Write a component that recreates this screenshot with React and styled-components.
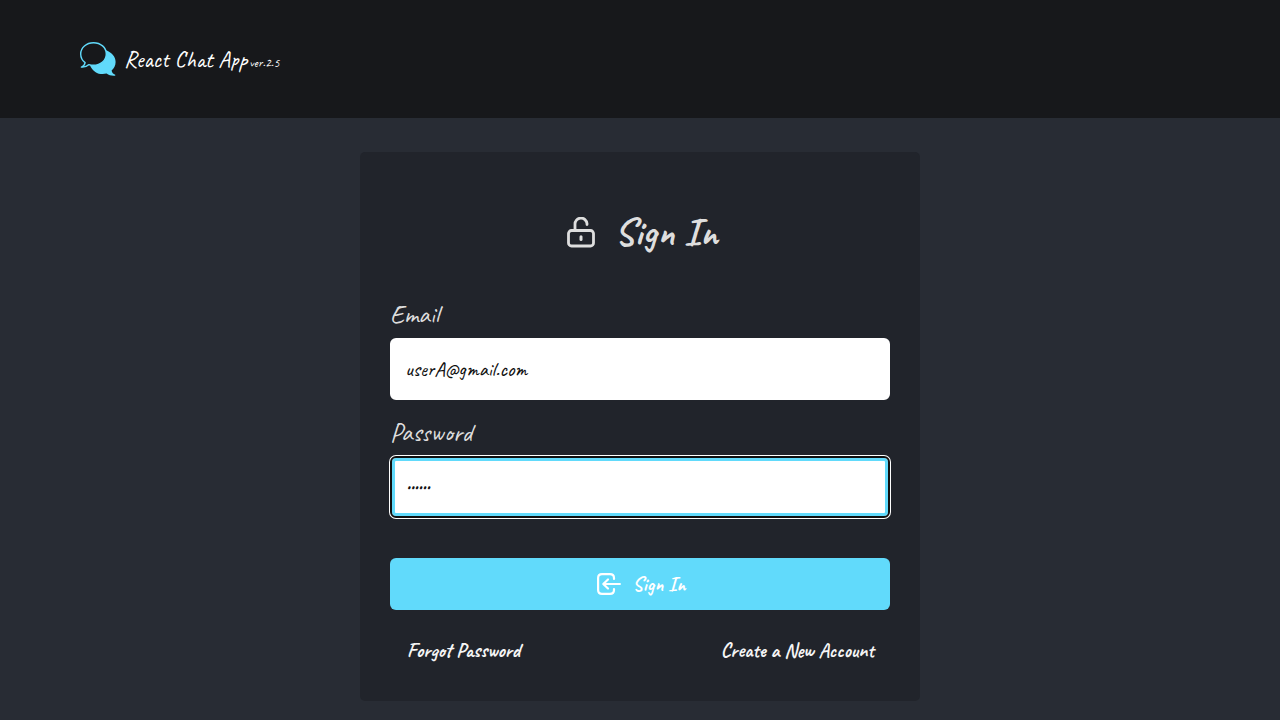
import React, { useState } from "react";
import styled, { createGlobalStyle } from "styled-components";

const cyan = "#61dafb";
const headerColor = "#17181b";

const GlobalStyle = createGlobalStyle`
  *, *::before, *::after { box-sizing: border-box; }
  body {
    margin: 0;
    background: #282c34;
    color: #fff;
    font-family: Caveat, Lato, cursive;
  }
  input, button { font: inherit; }
`;

const Header = styled.header`
  display: flex;
  align-items: center;
  min-height: 118px;
  padding: 0 80px;
  background: ${headerColor};
`;

const Brand = styled.div`
  display: flex;
  align-items: center;
  gap: 8px;
`;

const BrandName = styled.h1`
  display: flex;
  align-items: baseline;
  gap: 2px;
  margin: 0;
  padding-top: 4px;
  font-size: 23px;
  line-height: 24px;
  font-weight: 400;
`;

const Version = styled.small`
  font-size: 13px;
`;

const Main = styled.main`
  display: flex;
  justify-content: center;
  padding: 34px 16px 19px;
`;

const Card = styled.form`
  display: flex;
  flex-direction: column;
  width: 100%;
  max-width: 560px;
  padding: 60px 30px 40px;
  border-radius: 5px;
  background: #21242b;
`;

const Title = styled.h2`
  display: flex;
  align-items: center;
  justify-content: center;
  gap: 19px;
  margin: 0 0 46px;
  padding-left: 5px;
  color: #dedede;
  font-size: 39px;
  line-height: 42px;
  font-weight: 700;
`;

const Field = styled.div`
  display: flex;
  flex-direction: column;
  margin-bottom: 18px;
`;

const Label = styled.label`
  margin-bottom: 8px;
  color: #dedede;
  font-size: 26px;
  line-height: 30px;
`;

const Input = styled.input`
  width: 100%;
  height: 62px;
  padding: 0 13px;
  border: 2px solid #fff;
  border-radius: 6px;
  background: #fff;
  color: #101010;
  font-size: 21px;
  outline: none;
  caret-color: transparent;

  &:focus {
    border-color: #101010;
    box-shadow: 0 0 0 1px #fff, inset 0 0 0 3px ${cyan};
  }
`;

const Submit = styled.button`
  display: flex;
  align-items: center;
  justify-content: center;
  gap: 12px;
  height: 52px;
  margin-top: 22px;
  padding: 0 6px 0 8px;
  border: 0;
  border-radius: 6px;
  background: ${cyan};
  color: #fff;
  font-size: 20px;
  font-weight: 700;
  cursor: pointer;
`;

const Links = styled.nav`
  display: flex;
  justify-content: space-between;
  padding: 31px 16px 0 17px;
`;

const TextLink = styled.a`
  color: #f5f5f5;
  font-size: 20px;
  line-height: 20px;
  font-weight: 700;
  text-decoration: none;
`;

function ChatLogo() {
  return (
    <svg width="36" height="35" viewBox="0 0 36 35" aria-hidden="true">
      <path
        d="M25.500 8C32 10.500 35.600 14.800 35.600 20c0 3.500-1.500 6.500-4 8.500.4 2.200 1.600 3.500 3.600 4.300.4.300.2.900-.3 1-3.200.3-6-.5-8.300-2.200-6.900 1.600-13.300-.8-16.600-8.200Z"
        fill={cyan}
      />
      <path
        d="M13.500.7C6.400.7.7 5.600.7 11.900c0 3.700 1.700 6.600 4.400 8.700-.3 2-1.400 3.500-3.700 4.500 3 .3 5.600-.6 7.600-2.500 1.400.4 2.900.6 4.500.6 7.100 0 12.800-4.900 12.800-11.300S20.600.7 13.500.7Z"
        fill={headerColor}
        stroke={cyan}
        strokeWidth="1.400"
        strokeLinejoin="round"
      />
    </svg>
  );
}

function UnlockIcon() {
  return (
    <svg width="28" height="32" viewBox="0 0 28 32" fill="none" stroke="currentColor" strokeWidth="2.800" strokeLinecap="round" aria-hidden="true">
      <rect x="1.500" y="13.500" width="25" height="15.500" rx="3" />
      <path d="M8 13V7.500a6 6 0 0 1 12-.8V7.500" />
      <path d="M14 19.800v2.800" strokeWidth="3" />
    </svg>
  );
}

function EnterIcon() {
  return (
    <svg width="24" height="22" viewBox="0 0 24 22" fill="none" stroke="currentColor" strokeWidth="2.200" strokeLinecap="round" strokeLinejoin="round" aria-hidden="true">
      <path d="M17 6V5c0-2.500-1.500-3.900-4-3.900H5C2.500 1.100 1.100 2.500 1.100 5v12c0 2.500 1.400 3.900 3.900 3.900h8c2.500 0 4-1.400 4-3.900v-1" />
      <path d="M22.900 11H6.500M11 6.500 6.300 11 11 15.500" />
    </svg>
  );
}

export default function App() {
  const [email, setEmail] = useState("userA@gmail.com");
  const [password, setPassword] = useState("123456");

  return (
    <>
      <GlobalStyle />
      <Header>
        <Brand>
          <ChatLogo />
          <BrandName>
            React Chat App <Version>ver.2.5</Version>
          </BrandName>
        </Brand>
      </Header>
      <Main>
        <Card onSubmit={(event) => event.preventDefault()}>
          <Title>
            <UnlockIcon />
            Sign In
          </Title>
          <Field>
            <Label htmlFor="email">Email</Label>
            <Input id="email" type="email" value={email} onChange={(event) => setEmail(event.target.value)} />
          </Field>
          <Field>
            <Label htmlFor="password">Password</Label>
            <Input id="password" type="password" autoFocus value={password} onChange={(event) => setPassword(event.target.value)} />
          </Field>
          <Submit type="submit">
            <EnterIcon />
            Sign In
          </Submit>
          <Links>
            <TextLink href="#forgot">Forgot Password</TextLink>
            <TextLink href="#signup">Create a New Account</TextLink>
          </Links>
        </Card>
      </Main>
    </>
  );
}
